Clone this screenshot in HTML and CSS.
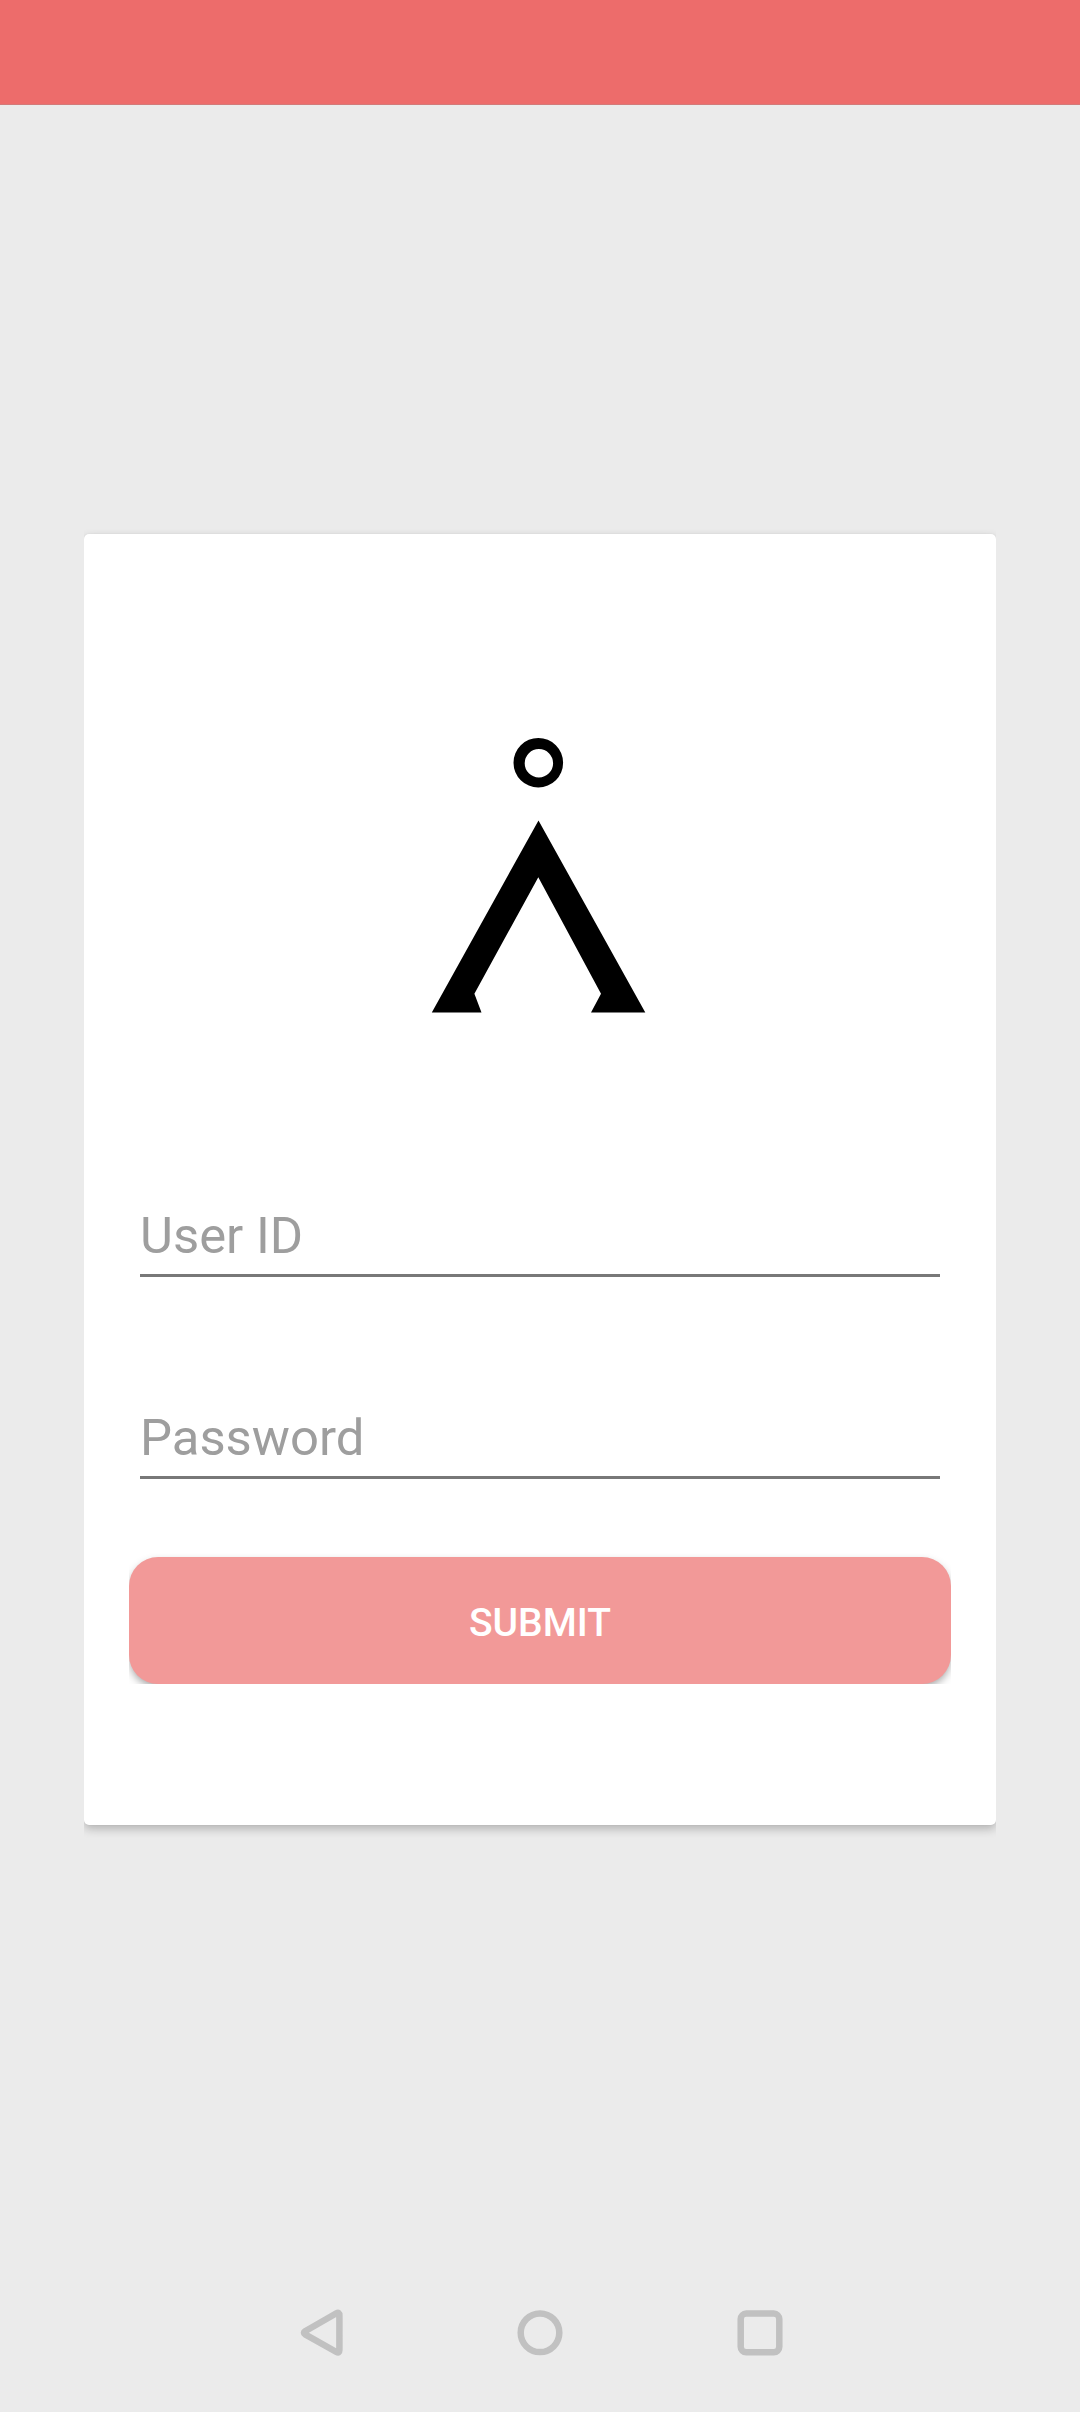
FILE: index.html
```html
<!DOCTYPE html>
<html lang="en">
<head>
<meta charset="utf-8">
<title>Sign in</title>
<link rel="stylesheet" href="styles.css">
</head>
<body>
<div class="screen">
  <header class="status-bar"></header>
  <main class="content">
    <div class="card-clip">
      <form class="card">
        <svg class="logo" width="240" height="310" viewBox="0 0 240 310" aria-hidden="true">
          <path fill-rule="evenodd" d="M93.5 42.7a24.8 24.8 0 1 0 49.6 0a24.8 24.8 0 1 0-49.6 0zM104.7 43.3a14.2 14.2 0 1 1 28.4 0a14.2 14.2 0 1 1-28.4 0z"/>
          <path d="M118.5 100.5L225.3 292.4H171L181 273.7L118.3 157.3L54.4 273.7L61.5 292.4H11.8z"/>
        </svg>
        <label class="field">User ID</label>
        <label class="field">Password</label>
        <div class="submit-clip">
          <button class="submit" type="button">SUBMIT</button>
        </div>
      </form>
    </div>
  </main>
  <nav class="nav-bar">
    <svg class="nav-icon" width="60" height="60" viewBox="0 0 60 60"><path d="M49.4 12.5V47Q49.4 50.7 46.4 49L15.1 31.3Q12.8 29.8 15.1 28.2L46.4 10.3Q49.4 8.7 49.4 12.5z"/></svg>
    <svg class="nav-icon" width="60" height="60" viewBox="0 0 60 60"><circle cx="30" cy="29.8" r="19.3"/></svg>
    <svg class="nav-icon" width="60" height="60" viewBox="0 0 60 60"><rect x="10.7" y="10.6" width="38.6" height="38.6" rx="5.5"/></svg>
  </nav>
</div>
</body>
</html>
```
FILE: styles.css
```css
* {
  box-sizing: border-box;
}

body {
  margin: 0;
  background: #ebebeb;
  font-family: Roboto, sans-serif;
}

.screen {
  display: flex;
  flex-direction: column;
  height: 2412px;
}

.status-bar {
  height: 105px;
  background: #ed6c6b;
  border-bottom: 1px solid #d27a79;
}

.content {
  flex: 1;
  padding: 419px 84px 0;
}

/* Trims the card's shadow at its left and right edges */
.card-clip {
  padding: 10px 0 24px;
  overflow: hidden;
}

.card {
  display: flex;
  flex-direction: column;
  height: 1291px;
  padding: 186px 45px 0;
  border-radius: 5px;
  background: #fff;
  box-shadow: 0 4px 10px rgba(0, 0, 0, 0.24), 0 0 2px rgba(0, 0, 0, 0.06);
}

.logo {
  margin: 0 0 146px 291px;
}

.field {
  height: 101px;
  margin: 0 11px 101px;
  border-bottom: 3px solid #787878;
  color: #9e9e9e;
  font-size: 50.8px;
  line-height: 119px;
}

.submit-clip {
  height: 131px;
  margin-top: -27px;
  padding-top: 4px;
  overflow: hidden;
}

.submit {
  display: block;
  width: 100%;
  height: 127px;
  padding: 5px 0 0;
  border: 0;
  border-radius: 29px;
  background: #f29998;
  box-shadow: 0 4px 8px -1px rgba(0, 0, 0, 0.36);
  color: #fff;
  font: 500 39px Roboto, sans-serif;
}

.nav-bar {
  display: flex;
  justify-content: center;
  gap: 160px;
  height: 109px;
}

.nav-icon {
  fill: none;
  stroke: #c1c1c1;
  stroke-width: 6.5;
  stroke-linejoin: round;
}
```
